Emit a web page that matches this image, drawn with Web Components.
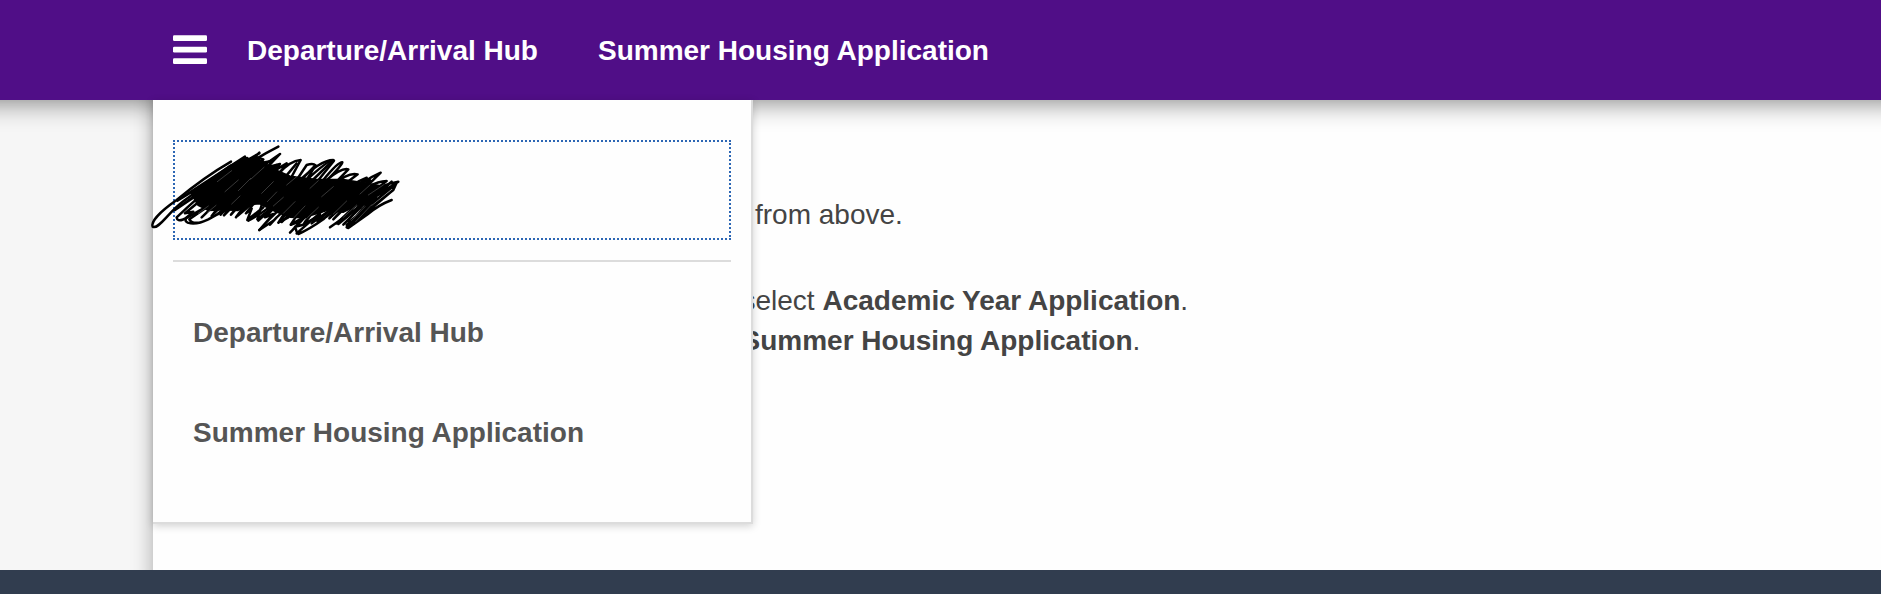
<!DOCTYPE html>
<html lang="en">
<head>
<meta charset="utf-8">
<title>Housing Portal</title>
<style>
  html, body {
    margin: 0;
    height: 100%;
    overflow: hidden;
  }

  body {
    font: 28px/40px "Liberation Sans", Arial, Helvetica, sans-serif;
    color: #444;
  }
</style>
</head>
<body>
<portal-page>
  <portal-header slot="header">
    <nav-link>Departure/Arrival Hub</nav-link>
    <nav-link>Summer Housing Application</nav-link>
    <portal-menu slot="menu">
      <user-entry slot="user"></user-entry>
      <menu-item>Departure/Arrival Hub</menu-item>
      <menu-item>Summer Housing Application</menu-item>
    </portal-menu>
  </portal-header>
  <text-block style="--indent: 602px">from above.</text-block>
  <text-block style="--indent: 588.5px">select <b>Academic Year Application</b>.<br><b>Summer Housing Application</b>.</text-block>
</portal-page>

<script>
function define(name, html) {
  const template = document.createElement('template');
  template.innerHTML = html;
  window.customElements.define(
    name,
    class extends HTMLElement {
      constructor() {
        super();
        this.attachShadow({ mode: 'open' });
        this.shadowRoot.appendChild(template.content.cloneNode(true));
      }
    },
  );
}

define('portal-page', `
<style>
  :host {
    display: flex;
    flex-direction: column;
    height: 100vh;
    background-color: #f6f6f6;
  }

  main {
    flex: 1;
    display: flex;
    flex-direction: column;
    gap: 46px;
    margin-left: 153px;
    padding-top: 95px;
    background-color: #fefefe;
    box-shadow: 20px 0 20px 20px rgba(0, 0, 0, 0.32);
  }

  footer {
    height: 24px;
    background-color: #313d4f;
    z-index: 1;
  }
</style>
<slot name="header"></slot>
<main><slot></slot></main>
<footer></footer>
`);

define('portal-header', `
<style>
  :host {
    display: block;
    position: relative;
    z-index: 2;
    height: 100px;
    background-color: #500e87;
    box-shadow: 0 -27px 24px 30px rgba(0, 0, 0, 0.47);
  }

  .bar {
    display: flex;
    align-items: center;
    height: 100%;
    padding-left: 173px;
  }

  svg {
    width: 34px;
    height: 30px;
    margin-right: 40px;
    fill: #fff;
  }

  nav {
    display: flex;
    gap: 60px;
    padding-top: 2px;
  }

  .dropdown {
    position: absolute;
    top: 100%;
    left: 153px;
  }
</style>
<div class="bar">
  <svg viewBox="0 0 34 30">
    <rect y="0.3" width="34" height="5.7" rx="1.2"/>
    <rect y="11.7" width="34" height="5.7" rx="1.2"/>
    <rect y="23.2" width="34" height="5.7" rx="1.2"/>
  </svg>
  <nav><slot></slot></nav>
</div>
<div class="dropdown"><slot name="menu"></slot></div>
`);

define('nav-link', `
<style>
  :host {
    display: block;
    font-weight: 700;
    color: #fff;
    white-space: nowrap;
  }
</style>
<slot></slot>
`);

define('portal-menu', `
<style>
  :host {
    display: flex;
    flex-direction: column;
    box-sizing: border-box;
    width: 600px;
    height: 424px;
    padding: 40px 20px 0;
    background-color: #fefefe;
    border: solid #dcdcdc;
    border-width: 0 2px 2px 0;
    box-shadow: 0 2px 8px rgba(0, 0, 0, 0.18);
  }

  .user {
    padding-bottom: 20px;
    margin-bottom: 20px;
    border-bottom: 2px solid #dcdcdc;
  }
</style>
<div class="user"><slot name="user"></slot></div>
<slot></slot>
`);

define('menu-item', `
<style>
  :host {
    display: flex;
    align-items: center;
    box-sizing: border-box;
    height: 100px;
    padding: 2px 0 0 20px;
    font-weight: 700;
    color: #555;
  }
</style>
<slot></slot>
`);

define('text-block', `
<style>
  :host {
    display: block;
    padding-left: var(--indent);
    white-space: nowrap;
  }
</style>
<slot></slot>
`);

/* Focused user row, the name is scribbled over */
define('user-entry', `
<style>
  :host {
    display: block;
    position: relative;
    box-sizing: border-box;
    height: 100px;
    border: 2px dotted #2c66b4;
  }

  svg {
    position: absolute;
    top: -12px;
    left: -45px;
    width: 290px;
    height: 140px;
    overflow: visible;
    fill: none;
    stroke: #000;
    stroke-width: 7.5;
    stroke-linecap: round;
    stroke-linejoin: round;
  }
</style>
<svg viewBox="0 0 870 420">
  <path fill="#000" d="M185 190L300 108L375 82L430 118L480 140L560 150L640 150L700 160L770 172L700 215L640 245L590 240L520 262L480 260L440 245L390 220L365 222L322 240L285 238L235 240L205 225Z"/>
  <path d="M303 95Q225 140 140 210C90 245 62 275 68 290C85 300 112 250 160 214L300 112"/>
  <path d="M345 80L142 212L352 84L135 240L388 70Q290 120 140 262C142 285 180 258 220 235L388 68"/>
  <path d="M445 50Q370 88 300 138L165 250L190 245L170 262C155 282 195 288 235 268Q262 252 290 240L450 72Q380 120 270 205L178 268C190 290 235 276 280 238"/>
  <path d="M215 262L320 160L245 258L350 150L272 254L400 110L282 256L415 118L303 254L430 110L318 262L440 105L322 258Q375 215 440 145"/>
  <path d="M382 82L400 88L390 100L428 92L412 112L450 102L430 124L470 100Q460 116 420 160L348 250L365 236L352 270L400 232L355 272Q410 242 450 205L512 90Q480 92 445 132"/>
  <path d="M500 100L395 225L382 268L420 238L385 272L470 195L530 105Q550 98 556 106L405 262L430 252L388 300Q440 240 505 192L610 90Q570 90 500 160"/>
  <path d="M388 300L430 272L420 284L440 262L520 190L445 278L530 150L556 106M445 278L475 262L612 92Q600 85 530 150"/>
  <path d="M455 276L580 150Q625 95 637 97C632 115 580 160 535 205L482 284L510 268L655 118Q635 112 590 150"/>
  <path d="M484 284L515 272L480 308L560 225M482 306Q510 275 555 230L683 133Q655 125 610 165L520 284L495 290L500 305M540 252L520 284L570 255L545 280L600 240L563 275"/>
  <path d="M505 312Q535 300 580 268L710 143Q665 160 620 205L500 310M598 265L720 150L610 268L752 128Q700 150 650 200M572 272L660 210"/>
  <path d="M600 292L640 264L625 282L670 245Q745 170 770 153Q720 155 655 215L600 262"/>
  <path d="M785 210Q745 225 710 255L655 294Q645 293 658 276L795 164M640 284L700 224L805 155Q765 160 715 190L620 280M635 270L785 155L695 240L650 292L790 180L800 158M650 285L740 205L662 288L785 184"/>
  <g stroke="#aaa" stroke-width="1">
    <path d="M262 155L305 122M285 185L325 150M325 182L362 145M362 148L402 112M395 190L430 155M412 215L440 186M430 228L460 202M460 250L495 215M490 265L525 228M525 270L565 232M575 200L610 170M610 252L650 213M640 262L680 225M664 272L705 230M677 275L725 224M470 165L500 140M540 175L565 152M205 250L235 228M233 247L258 226M305 222L330 198M690 192L720 165M715 195L760 165"/>
  </g>
</svg>
`);
</script>
</body>
</html>
